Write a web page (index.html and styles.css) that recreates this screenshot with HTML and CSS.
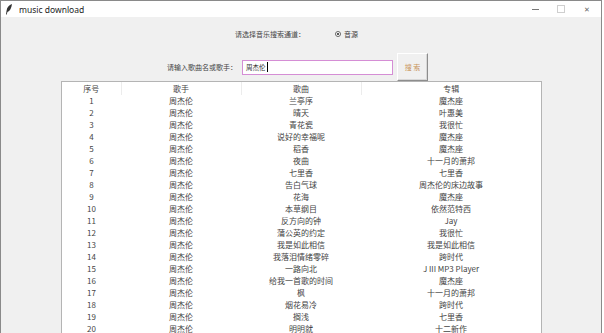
FILE: index.html
```html
<!DOCTYPE html>
<html lang="zh">

<head>
    <meta charset="UTF-8">
    <title>music download</title>
    <link rel="stylesheet" href="styles.css">
</head>

<body>
    <div class="window">
        <div class="titlebar">
            <svg class="feather" width="8" height="11" viewBox="0 0 8 11">
                <path d="M7 0 C4 1 2 3 1.5 7 L1 10.5 L1.8 10.6 L2.4 8 C5 7 6.5 4 7 0 Z" fill="#333"/>
            </svg>
            <span class="title">music download</span>
            <div class="controls">
                <span class="ctl min"></span>
                <span class="ctl max"></span>
                <span class="ctl close">✕</span>
            </div>
        </div>

        <div class="client">
            <div class="channel">
                <span class="label">请选择音乐搜索通道：</span>
                <span class="radio"><i></i></span>
                <span class="label">音源</span>
            </div>

            <div class="search">
                <span class="label">请输入歌曲名或歌手：</span>
                <div class="entry">周杰伦<b class="caret"></b></div>
                <div class="btn">搜 索</div>
            </div>

            <div class="tree">
                <table>
                    <colgroup>
                        <col class="c1">
                        <col class="c2">
                        <col class="c3">
                        <col class="c4">
                    </colgroup>
                    <thead>
                        <tr><th>序号</th><th>歌手</th><th>歌曲</th><th>专辑</th></tr>
                    </thead>
                    <tbody id="rows"></tbody>
                </table>
            </div>
        </div>
    </div>

    <script>
        const songs = [
            ["兰亭序", "魔杰座"],
            ["晴天", "叶惠美"],
            ["青花瓷", "我很忙"],
            ["说好的幸福呢", "魔杰座"],
            ["稻香", "魔杰座"],
            ["夜曲", "十一月的萧邦"],
            ["七里香", "七里香"],
            ["告白气球", "周杰伦的床边故事"],
            ["花海", "魔杰座"],
            ["本草纲目", "依然范特西"],
            ["反方向的钟", "Jay"],
            ["蒲公英的约定", "我很忙"],
            ["我是如此相信", "我是如此相信"],
            ["我落泪情绪零碎", "跨时代"],
            ["一路向北", "J III MP3 Player"],
            ["给我一首歌的时间", "魔杰座"],
            ["枫", "十一月的萧邦"],
            ["烟花易冷", "跨时代"],
            ["搁浅", "七里香"],
            ["明明就", "十二新作"]
        ];
        const tbody = document.getElementById("rows");
        tbody.innerHTML = songs.map((s, i) => {
            return `<tr><td>${i + 1}</td><td>周杰伦</td><td>${s[0]}</td><td>${s[1]}</td></tr>`
        }).join("");
    </script>
</body>

</html>
```

FILE: styles.css
```css
* {
    margin: 0;
    padding: 0;
    box-sizing: border-box;
}

body {
    width: 604px;
    height: 333px;
    overflow: hidden;
    background: #fff;
    font-family: "Noto Sans", "Noto Sans CJK SC", sans-serif;
    color: #444;
}

.window {
    width: 602px;
    height: 333px;
    border: 1px solid #8a8a8a;
    border-bottom: none;
    background: #f0f0f0;
    overflow: hidden;
}

.titlebar {
    height: 16px;
    background: #fff;
    display: flex;
    align-items: center;
    padding-left: 4px;
}

.feather {
    display: block;
}

.title {
    font-size: 8.5px;
    margin-left: 6px;
    color: #222;
}

.controls {
    margin-left: auto;
    display: flex;
    align-items: center;
    height: 16px;
}

.ctl {
    width: 26px;
    height: 16px;
    display: flex;
    align-items: center;
    justify-content: center;
    color: #666;
    font-size: 7px;
}

.min::before {
    content: "";
    width: 7px;
    height: 1px;
    background: #777;
}

.max::before {
    content: "";
    width: 6px;
    height: 6px;
    border: 1px solid #cfcfcf;
}

.close {
    margin-right: 1px;
}

.client {
    padding-top: 10px;
}

.label {
    font-family: "Noto Sans CJK SC", sans-serif;
    font-size: 7px;
    color: #444;
    white-space: nowrap;
}

.channel {
    display: flex;
    align-items: center;
    height: 14px;
    padding-left: 234px;
}

.radio {
    width: 6px;
    height: 6px;
    border: 1px solid #666;
    border-radius: 50%;
    margin: 0 3px 0 30px;
    display: flex;
    align-items: center;
    justify-content: center;
    background: #fff;
}

.radio i {
    width: 2px;
    height: 2px;
    border-radius: 50%;
    background: #222;
}

.search {
    display: flex;
    align-items: center;
    height: 28px;
    margin-top: 12px;
    padding-left: 166px;
}

.entry {
    width: 151px;
    height: 15px;
    margin-left: 5px;
    border: 1px solid #d58ed5;
    background: #fff;
    font-family: "Noto Sans CJK SC", sans-serif;
    font-size: 6.5px;
    line-height: 13px;
    padding-left: 3px;
    display: flex;
    align-items: center;
    color: #333;
}

.caret {
    width: 1px;
    height: 10px;
    background: #000;
    margin-left: 1px;
}

.btn {
    width: 31px;
    height: 28px;
    margin-left: 4px;
    border-top: 1px solid #fff;
    border-left: 1px solid #fff;
    border-right: 1px solid #8d8d8d;
    border-bottom: 1px solid #8d8d8d;
    box-shadow: inset -1px -1px 0 #d8d8d8;
    display: flex;
    align-items: center;
    justify-content: center;
    font-family: "Noto Sans CJK SC", serif;
    font-size: 7px;
    color: #c9955c;
}

.tree {
    margin-left: 60px;
    width: 481px;
    background: #fff;
    border: 1px solid #b4b4b4;
    border-bottom: none;
    height: 260px;
}

table {
    width: 479px;
    table-layout: fixed;
    border-collapse: collapse;
    font-family: "Noto Sans CJK SC", sans-serif;
    font-size: 8px;
    color: #444;
}

.c1 { width: 59px; }
.c2 { width: 120px; }
.c3 { width: 120px; }
.c4 { width: 180px; }

th {
    font-weight: normal;
    height: 13px;
    line-height: 13px;
    border-right: 1px solid #ececec;
    text-align: center;
}

th:last-child {
    border-right: none;
}

td {
    height: 12px;
    line-height: 12px;
    text-align: center;
    white-space: nowrap;
    overflow: hidden;
}
```
